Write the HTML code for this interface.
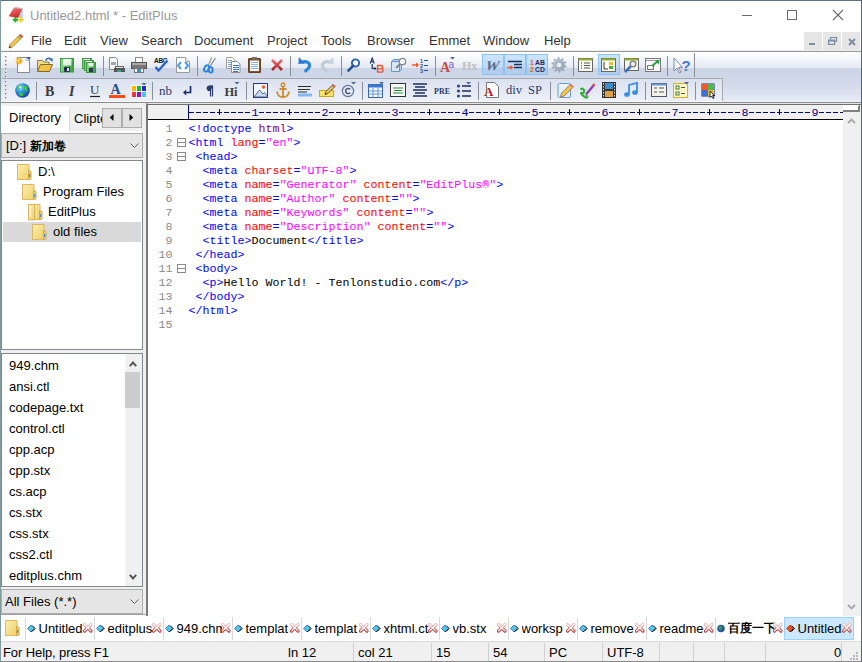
<!DOCTYPE html>
<html><head><meta charset="utf-8">
<style>
*{margin:0;padding:0;box-sizing:border-box}
html,body{width:862px;height:662px;overflow:hidden;background:#fff}
body{position:relative;font-family:"Liberation Sans",sans-serif;font-size:13px;color:#000}
.a{position:absolute}
.t{position:absolute;white-space:pre;line-height:15px;font-size:13px}
.m{position:absolute;white-space:pre;font-family:"Liberation Mono",monospace;font-size:11.67px;line-height:14px}
svg{position:absolute;overflow:visible}
</style></head><body>

<!-- window border -->
<div class="a" style="left:0;top:0;width:862px;height:1px;background:#5a7185"></div>
<div class="a" style="left:0;top:0;width:1px;height:662px;background:#819a9e"></div>
<div class="a" style="left:861px;top:0;width:1px;height:662px;background:#4f6a80"></div>

<!-- title -->
<div class="t" style="left:30px;top:8px;color:#999">Untitled2.html * - EditPlus</div>
<div class="a" style="left:742px;top:15px;width:10px;height:1px;background:#6a6a6a"></div>
<div class="a" style="left:787px;top:10px;width:10px;height:10px;border:1px solid #6a6a6a"></div>
<svg style="left:833px;top:10px" width="10" height="10"><path d="M0 0L10 10M10 0L0 10" stroke="#6a6a6a" stroke-width="1.1"/></svg>

<!-- menu -->
<div class="t" style="left:31px;top:33px;color:#333">File</div>
<div class="t" style="left:64px;top:33px;color:#333">Edit</div>
<div class="t" style="left:100px;top:33px;color:#333">View</div>
<div class="t" style="left:141px;top:33px;color:#333">Search</div>
<div class="t" style="left:194px;top:33px;color:#333">Document</div>
<div class="t" style="left:267px;top:33px;color:#333">Project</div>
<div class="t" style="left:321px;top:33px;color:#333">Tools</div>
<div class="t" style="left:367px;top:33px;color:#333">Browser</div>
<div class="t" style="left:429px;top:33px;color:#333">Emmet</div>
<div class="t" style="left:483px;top:33px;color:#333">Window</div>
<div class="t" style="left:544px;top:33px;color:#333">Help</div>
<div class="a" style="left:804px;top:32px;width:18px;height:17.5px;background:#e6e6e6"></div>
<div class="a" style="left:823px;top:32px;width:18px;height:17.5px;background:#e6e6e6"></div>
<div class="a" style="left:842px;top:32px;width:18px;height:17.5px;background:#e6e6e6"></div>
<div class="a" style="left:1px;top:50px;width:860px;height:1px;background:#ececec"></div>
<div class="a" style="left:1px;top:51px;width:860px;height:1px;background:#999"></div>

<!-- toolbar band -->
<div class="a" style="left:1px;top:52px;width:860px;height:51px;background:linear-gradient(#fff 0px,#f6f8fb 6px,#e3e8f2 15.9px,#ccd5e6 16px,#d0d8e9 30px,#dde3f0 43px,#e9edf6 49px)"></div>
<div class="a" style="left:2px;top:78px;width:721px;height:24px;border-top:1px solid #a4a8b0;border-right:1px solid #a4a8b0;background:linear-gradient(#dae1ef,#eef1f8)"></div>
<div class="a" style="left:1px;top:101px;width:722px;height:1px;background:#fafbfd"></div>
<div class="a" style="left:1px;top:102px;width:860px;height:1px;background:#8e8e8e"></div>
<!--ICONS-->
<div class="a" style="left:5px;top:56px;width:1px;height:1px;background:#7c8698;box-shadow:1px 1px 0 #fff,1px 0 0 #b8c0ce,0 1px 0 #b8c0ce"></div>
<div class="a" style="left:5px;top:60px;width:1px;height:1px;background:#7c8698;box-shadow:1px 1px 0 #fff,1px 0 0 #b8c0ce,0 1px 0 #b8c0ce"></div>
<div class="a" style="left:5px;top:64px;width:1px;height:1px;background:#7c8698;box-shadow:1px 1px 0 #fff,1px 0 0 #b8c0ce,0 1px 0 #b8c0ce"></div>
<div class="a" style="left:5px;top:68px;width:1px;height:1px;background:#7c8698;box-shadow:1px 1px 0 #fff,1px 0 0 #b8c0ce,0 1px 0 #b8c0ce"></div>
<div class="a" style="left:5px;top:72px;width:1px;height:1px;background:#7c8698;box-shadow:1px 1px 0 #fff,1px 0 0 #b8c0ce,0 1px 0 #b8c0ce"></div>
<div class="a" style="left:5px;top:76px;width:1px;height:1px;background:#7c8698;box-shadow:1px 1px 0 #fff,1px 0 0 #b8c0ce,0 1px 0 #b8c0ce"></div>
<div class="a" style="left:5px;top:81px;width:1px;height:1px;background:#7c8698;box-shadow:1px 1px 0 #fff,1px 0 0 #b8c0ce,0 1px 0 #b8c0ce"></div>
<div class="a" style="left:5px;top:85px;width:1px;height:1px;background:#7c8698;box-shadow:1px 1px 0 #fff,1px 0 0 #b8c0ce,0 1px 0 #b8c0ce"></div>
<div class="a" style="left:5px;top:89px;width:1px;height:1px;background:#7c8698;box-shadow:1px 1px 0 #fff,1px 0 0 #b8c0ce,0 1px 0 #b8c0ce"></div>
<div class="a" style="left:5px;top:93px;width:1px;height:1px;background:#7c8698;box-shadow:1px 1px 0 #fff,1px 0 0 #b8c0ce,0 1px 0 #b8c0ce"></div>
<div class="a" style="left:5px;top:97px;width:1px;height:1px;background:#7c8698;box-shadow:1px 1px 0 #fff,1px 0 0 #b8c0ce,0 1px 0 #b8c0ce"></div>
<div class="a" style="left:482px;top:54px;width:22px;height:21px;background:rgba(140,196,248,.42);border:1px solid #8cc4f4"></div>
<div class="a" style="left:504px;top:54px;width:22px;height:21px;background:rgba(140,196,248,.42);border:1px solid #8cc4f4"></div>
<div class="a" style="left:526px;top:54px;width:22px;height:21px;background:rgba(140,196,248,.42);border:1px solid #8cc4f4"></div>
<div class="a" style="left:598px;top:54px;width:22px;height:21px;background:rgba(140,196,248,.42);border:1px solid #8cc4f4"></div>
<svg style="left:15px;top:57px" width="16" height="16" viewBox="0 0 16 16"><rect x="2.5" y="0.5" width="12" height="15" fill="#fbfbfb" stroke="#8a8a8a"/><path d="M11 0.5v3h3.5" fill="#fff" stroke="#aaa" stroke-width=".8"/><g stroke="#ffc040" stroke-width="1.2" opacity=".8"><path d="M4 0v8M0 4h8M1.2 1.2l5.6 5.6M6.8 1.2l-5.6 5.6"/></g><circle cx="4" cy="4" r="2.6" fill="#ffa800"/><circle cx="3.5" cy="3.5" r="1.2" fill="#ffe070"/><path d="M11 0h5l-2.5 2.8z" fill="#3e5f92"/></svg>
<svg style="left:37px;top:57px" width="16" height="16" viewBox="0 0 16 16"><path d="M0.5 3.5h5l1.5 1.5h5v8h-11.5z" fill="#f6dc8a" stroke="#8f7c4c"/><path d="M0.5 14.5l3-7h12l-3 7z" fill="#f5c342" stroke="#7b6a3a"/><path d="M8.5 3.5Q11 0 14.2 2.2" fill="none" stroke="#3a6bb0" stroke-width="1.4"/><path d="M12.2 2.6l3.6-1.4-.4 3.8z" fill="#3a6bb0"/></svg>
<svg style="left:59px;top:57px" width="16" height="16" viewBox="0 0 16 16"><defs><linearGradient id="sg" x1="0" x2="1"><stop offset="0" stop-color="#8fd48f"/><stop offset=".5" stop-color="#5cb85c"/><stop offset="1" stop-color="#3f9f3f"/></linearGradient><linearGradient id="lg" x1="0" y1="0" x2="1" y2="1"><stop offset="0" stop-color="#fff"/><stop offset="1" stop-color="#cfe8cf"/></linearGradient></defs><rect x="1.5" y="1.5" width="13" height="13.5" fill="url(#sg)" stroke="#3f9a3f"/><rect x="4" y="2" width="8.5" height="6.5" fill="url(#lg)"/><rect x="5" y="10" width="6" height="5" fill="#2c3a58"/><rect x="8" y="11" width="2" height="3" fill="#dde"/><rect x="6" y="11" width="1.5" height="1.5" fill="#000"/></svg>
<svg style="left:81px;top:57px" width="16" height="16" viewBox="0 0 16 16"><rect x="1.5" y="1.5" width="9" height="10" fill="url(#sg)" stroke="#3f9a3f"/><rect x="3" y="2" width="6" height="1.5" fill="#fff"/><rect x="3.5" y="3.5" width="9" height="10" fill="url(#sg)" stroke="#3f9a3f"/><rect x="5" y="4" width="6" height="1.5" fill="#fff"/><rect x="5.5" y="5.5" width="9" height="10" fill="url(#sg)" stroke="#3f9a3f"/><rect x="7.5" y="6" width="5" height="3.5" fill="url(#lg)"/><rect x="8" y="11" width="4" height="4" fill="#2c3a58"/></svg>
<div class="a" style="left:103px;top:56px;width:1px;height:20px;background:#8a8e96"></div>
<svg style="left:109px;top:57px" width="16" height="16" viewBox="0 0 16 16"><path d="M0.5 0.5h6l2 2v10h-8z" fill="#fafafa" stroke="#8a8a8a"/><rect x="2" y="5" width="5" height="3" fill="#9ab"/><rect x="6.5" y="9.5" width="8" height="3" fill="#e8e8e8" stroke="#666"/><rect x="5" y="11" width="11" height="4" fill="#555"/><rect x="8" y="13" width="4" height="2" fill="#3a8"/></svg>
<svg style="left:131px;top:57px" width="16" height="16" viewBox="0 0 16 16"><rect x="4.5" y="0.5" width="7" height="5" fill="#fff" stroke="#888"/><rect x="0.5" y="5.5" width="15" height="6" fill="#777" stroke="#555"/><rect x="1" y="6" width="14" height="2" fill="#aaa"/><rect x="3.5" y="11.5" width="9" height="4" fill="#fff" stroke="#777"/><rect x="6" y="12" width="4" height="3" fill="#3a8fc0"/></svg>
<svg style="left:153px;top:57px" width="16" height="16" viewBox="0 0 16 16"><text x="1" y="6" font-family="Liberation Sans" font-weight="bold" font-size="6.5" fill="#111" letter-spacing="-.3">ABC</text><path d="M2.5 10l3 3.5 9-10" fill="none" stroke="#2e64c8" stroke-width="2.4"/></svg>
<svg style="left:175px;top:57px" width="16" height="16" viewBox="0 0 16 16"><path d="M1.5 0.5h9l4 4v11h-13z" fill="#fff" stroke="#999"/><path d="M10.5 0.5v4h4" fill="#eee" stroke="#aaa"/><path d="M6 5l-3 3.5 3 3.5M10 5l3 3.5-3 3.5" fill="none" stroke="#4a9ef0" stroke-width="2"/></svg>
<div class="a" style="left:197px;top:56px;width:1px;height:20px;background:#8a8e96"></div>
<svg style="left:202px;top:57px" width="16" height="16" viewBox="0 0 16 16"><path d="M6.5 8.5L9.5 0.5M8.5 8.5L13.5 1" stroke="#8a8a8a" stroke-width="1.3"/><path d="M9.5 0.5L7 8" stroke="#d0d0d0" stroke-width=".6"/><ellipse cx="4.6" cy="11.5" rx="2.3" ry="3.3" transform="rotate(25 4.6 11.5)" fill="none" stroke="#2a84e0" stroke-width="1.9"/><ellipse cx="8.6" cy="12.8" rx="2" ry="2.8" transform="rotate(-10 8.6 12.8)" fill="none" stroke="#2a84e0" stroke-width="1.9"/></svg>
<svg style="left:225px;top:57px" width="16" height="16" viewBox="0 0 16 16"><path d="M1.5 0.5h6l2 2v9h-8z" fill="#fff" stroke="#a0a0a0"/><path d="M3 3.5h4M3 5.5h5M3 7.5h5M3 9.5h4" stroke="#7aa0d0"/><path d="M6.5 4.5h6l2.5 2.5v8.5h-8.5z" fill="#fff" stroke="#909090"/><path d="M8 8.5h6M8 10.5h6M8 12.5h6M8 14.5h5" stroke="#3a70c0"/></svg>
<svg style="left:247px;top:57px" width="16" height="16" viewBox="0 0 16 16"><rect x="1.5" y="1.5" width="12" height="14" rx=".5" fill="#8a5222" stroke="#6b3e18"/><rect x="3" y="3.5" width="9" height="10.5" fill="#f6f9fc"/><path d="M4 5.5h7M4 7.5h7M4 9.5h7M4 11.5h7" stroke="#8ab8dc"/><rect x="5" y="0" width="5" height="2.5" fill="#707070"/></svg>
<svg style="left:269px;top:57px" width="16" height="16" viewBox="0 0 16 16"><defs><linearGradient id="xr" x1="0" y1="0" x2="0" y2="1"><stop offset="0" stop-color="#f06a6a"/><stop offset="1" stop-color="#a82020"/></linearGradient></defs><path d="M3 3l10 10M13 3l-10 10" stroke="url(#xr)" stroke-width="2.6"/></svg>
<div class="a" style="left:290px;top:56px;width:1px;height:20px;background:#8a8e96"></div>
<svg style="left:297px;top:57px" width="16" height="16" viewBox="0 0 16 16"><path d="M5 5.2C9 3.6 13.6 5.6 12.4 9.6 11.6 12 9.4 13.4 7.6 14.6" fill="none" stroke="#2a86dc" stroke-width="3.1"/><path d="M1.8 0L1.4 7 7.8 6.6z" fill="#2a7ad0"/></svg>
<svg style="left:319px;top:57px" width="16" height="16" viewBox="0 0 16 16"><path d="M11 5.2C7 3.6 2.4 5.6 3.6 9.6 4.4 12 6.6 13.4 8.4 14.6" fill="none" stroke="#bccdd8" stroke-width="3.1"/><path d="M14.2 0L14.6 7 8.2 6.6z" fill="#c4d4de"/></svg>
<div class="a" style="left:341px;top:56px;width:1px;height:20px;background:#8a8e96"></div>
<svg style="left:346px;top:57px" width="16" height="16" viewBox="0 0 16 16"><circle cx="9.5" cy="6" r="3.6" fill="#f4f8fc" stroke="#2a64b0" stroke-width="1.9"/><path d="M7 8.8l-4.6 4.8" stroke="#234e90" stroke-width="2.6" stroke-linecap="round"/></svg>
<svg style="left:369px;top:57px" width="16" height="16" viewBox="0 0 16 16"><path d="M1.2 6.5l2-5.5 2 5.5M1.8 4.8h2.8" fill="none" stroke="#1a2a50" stroke-width="1.1"/><path d="M3.2 7v4.5h3" fill="none" stroke="#1a2a50" stroke-width="1.2"/><path d="M5.5 9.8l2 1.7-2 1.7z" fill="#1a2a50"/><path d="M8.5 8.5h3.5a1.6 1.6 0 0 1 0 3.2h-3.5zM8.5 11.7h4a1.7 1.7 0 0 1 0 3.4h-4z" fill="none" stroke="#f05020" stroke-width="1.3"/></svg>
<svg style="left:391px;top:57px" width="16" height="16" viewBox="0 0 16 16"><path d="M0.5 4.5l2-2h8v10l-2 2h-8z" fill="#b8d2ee" stroke="#6a94c8"/><path d="M0.5 4.5h8v10M8.5 4.5l2-2" fill="none" stroke="#6a94c8"/><rect x="1" y="5" width="7" height="9" fill="#d6e6f6"/><circle cx="11.5" cy="4.5" r="3.2" fill="#fff" stroke="#8a8a8a" stroke-width="1.3"/><path d="M9.2 6.8l-4 4" stroke="#7a7a7a" stroke-width="1.8"/></svg>
<svg style="left:412px;top:57px" width="16" height="16" viewBox="0 0 16 16"><path d="M0 8h5" stroke="#f05a20" stroke-width="1.5"/><path d="M4 5.5l3 2.5-3 2.5z" fill="#f05a20"/><text x="8" y="5.5" font-family="Liberation Sans" font-size="5.5" font-weight="bold" fill="#2a4e8e">1</text><text x="8" y="10.5" font-family="Liberation Sans" font-size="5.5" font-weight="bold" fill="#2a4e8e">2</text><text x="8" y="15.5" font-family="Liberation Sans" font-size="5.5" font-weight="bold" fill="#2a4e8e">3</text><path d="M12 3.5h4M12 8.5h4M12 13.5h4" stroke="#2a4e8e" stroke-width="1.2"/></svg>
<div class="a" style="left:435px;top:56px;width:1px;height:20px;background:#8a8e96"></div>
<svg style="left:440px;top:57px" width="16" height="16" viewBox="0 0 16 16"><text x="0" y="15" font-family="Liberation Serif" font-weight="bold" font-size="14" fill="#c84848">A</text><text x="8.5" y="11" font-family="Liberation Sans" font-size="10" fill="#7060c8">a</text><path d="M10 0h5l-2.5 2.5z" fill="#4a6896"/></svg>
<svg style="left:462px;top:57px" width="20" height="16" viewBox="0 0 20 16"><text x="0" y="13" font-family="Liberation Serif" font-weight="bold" font-size="12" fill="#c0c0c0">Hx</text></svg>
<svg style="left:485px;top:57px" width="16" height="16" viewBox="0 0 16 16"><g transform="skewX(-18) translate(4 0)"><text x="0" y="13.5" font-family="Liberation Serif" font-weight="bold" font-size="13.5" fill="#5a6a86">W</text></g></svg>
<svg style="left:507px;top:57px" width="16" height="16" viewBox="0 0 16 16"><path d="M1 4.5h14M7 7.5h8M7 10.5h8" stroke="#1e2e5a" stroke-width="1.5"/><path d="M0 10.5h4" stroke="#f05a20" stroke-width="1.5"/><path d="M3.5 8l3 2.5-3 2.5z" fill="#f05a20"/></svg>
<svg style="left:529px;top:57px" width="16" height="16" viewBox="0 0 16 16"><text x="1" y="8" font-family="Liberation Sans" font-weight="bold" font-size="6.8" fill="#f05a20">1</text><text x="1" y="14.5" font-family="Liberation Sans" font-weight="bold" font-size="6.8" fill="#f05a20">2</text><text x="6" y="8" font-family="Liberation Sans" font-weight="bold" font-size="6.8" fill="#1a2a5a">AB</text><text x="6" y="14.5" font-family="Liberation Sans" font-weight="bold" font-size="6.8" fill="#1a2a5a">CD</text></svg>
<svg style="left:551px;top:57px" width="16" height="16" viewBox="0 0 16 16"><defs><linearGradient id="gg" x1="0" y1="0" x2="1" y2="1"><stop offset="0" stop-color="#c8d4e0"/><stop offset="1" stop-color="#8a9cb0"/></linearGradient></defs><path d="M13.40 8.00 L13.37 8.61 L15.21 9.14 L14.94 10.26 L13.06 9.89 L12.37 11.17 L12.37 11.17 L11.98 11.65 L13.16 13.16 L12.29 13.91 L10.98 12.50 L9.67 13.14 L9.67 13.14 L9.08 13.29 L9.14 15.21 L8.00 15.30 L7.76 13.39 L6.33 13.14 L6.33 13.14 L5.76 12.91 L4.69 14.50 L3.71 13.91 L4.64 12.22 L3.63 11.17 L3.63 11.17 L3.30 10.66 L1.50 11.31 L1.06 10.26 L2.80 9.44 L2.60 8.00 L2.60 8.00 L2.63 7.39 L0.79 6.86 L1.06 5.74 L2.94 6.11 L3.63 4.83 L3.63 4.83 L4.02 4.35 L2.84 2.84 L3.71 2.09 L5.02 3.50 L6.33 2.86 L6.33 2.86 L6.92 2.71 L6.86 0.79 L8.00 0.70 L8.24 2.61 L9.67 2.86 L9.67 2.86 L10.24 3.09 L11.31 1.50 L12.29 2.09 L11.36 3.78 L12.37 4.83 L12.37 4.83 L12.70 5.34 L14.50 4.69 L14.94 5.74 L13.20 6.56 L13.40 8.00Z" fill="url(#gg)" stroke="#8898a8" stroke-width=".6"/><circle cx="8" cy="8" r="3" fill="#e8edf5" stroke="#8898a8" stroke-width=".8"/></svg>
<div class="a" style="left:573px;top:56px;width:1px;height:20px;background:#8a8e96"></div>
<svg style="left:578px;top:57px" width="16" height="16" viewBox="0 0 16 16"><rect x="0.5" y="1.5" width="14" height="13" fill="#fbfbf4" stroke="#666"/><rect x="0.5" y="1.5" width="14" height="2" fill="#98b030"/><path d="M3 6h1M3 8.5h1M3 11h1" stroke="#e04020" stroke-width="1.4"/><path d="M6 6h6M6 8.5h6M6 11h6" stroke="#555"/></svg>
<svg style="left:601px;top:57px" width="16" height="16" viewBox="0 0 16 16"><rect x="0.5" y="1.5" width="14" height="13" fill="#fbfbf4" stroke="#666"/><rect x="0.5" y="1.5" width="14" height="2" fill="#98b030"/><path d="M3 5v7h4" fill="none" stroke="#333"/><rect x="8" y="5" width="4" height="3" fill="#f0c020"/><rect x="8" y="9" width="4" height="3" fill="#40b040"/></svg>
<svg style="left:623px;top:57px" width="16" height="16" viewBox="0 0 16 16"><rect x="1.5" y="1.5" width="14" height="12" fill="#f6f6f0" stroke="#666"/><rect x="1.5" y="1.5" width="14" height="2" fill="#98b030"/><path d="M2 15l6-6" stroke="#3a70c0" stroke-width="2.6"/><circle cx="10" cy="7" r="2.8" fill="none" stroke="#888" stroke-width="1.6"/></svg>
<svg style="left:645px;top:57px" width="16" height="16" viewBox="0 0 16 16"><rect x="0.5" y="1.5" width="15" height="13" fill="#fafafa" stroke="#777"/><path d="M1 3.5h14" stroke="#999"/><rect x="2.5" y="8.5" width="6" height="4" fill="none" stroke="#777"/><path d="M7 9l6-5" stroke="#20a040" stroke-width="1.8"/><path d="M10 3.5h4v4z" fill="#20a040"/></svg>
<div class="a" style="left:667px;top:56px;width:1px;height:20px;background:#8a8e96"></div>
<svg style="left:673px;top:57px" width="20" height="16" viewBox="0 0 20 16"><path d="M1 1v13l3-3 2.5 5 1.5-1-2.5-4.5h4z" fill="#fff" stroke="#7a8aa0"/><text x="8.5" y="14" font-family="Liberation Sans" font-weight="bold" font-size="15" fill="#4a78c8">?</text></svg>
<div class="a" style="left:694px;top:53px;width:1px;height:24px;background:#8a8e96"></div>
<svg style="left:15px;top:82px" width="16" height="16" viewBox="0 0 16 16"><defs><radialGradient id="glb" cx=".35" cy=".3" r=".75"><stop offset="0" stop-color="#8ee0ff"/><stop offset=".45" stop-color="#2a90e0"/><stop offset="1" stop-color="#1a3a9a"/></radialGradient></defs><circle cx="7.5" cy="8.5" r="7.3" fill="url(#glb)"/><path d="M1.5 6q2-3 4-3.5 1.5 1 .5 2.5-2 .5-1.5 2-2 .5-3-1zM9 4q2-1 3.5 1-.5 2 0 4-1.5 1-2.5-.5-1.5-2-1-4.5zM4 11q2-1 4 .5 1 1.5-.5 2.5-2 .5-3.5-1z" fill="#3ac83a"/><circle cx="5" cy="5" r="1.3" fill="#e8fff0" opacity=".8"/></svg>
<div class="a" style="left:36px;top:82px;width:1px;height:18px;background:#8a8e96"></div>
<svg style="left:43px;top:82px" width="16" height="16" viewBox="0 0 16 16"><text x="2" y="14" font-family="Liberation Serif" font-weight="bold" font-size="14" fill="#3a3a3a">B</text></svg>
<svg style="left:65px;top:82px" width="16" height="16" viewBox="0 0 16 16"><text x="4" y="14" font-family="Liberation Serif" font-weight="bold" font-style="italic" font-size="14" fill="#3a3a3a">I</text></svg>
<svg style="left:87px;top:82px" width="16" height="16" viewBox="0 0 16 16"><text x="3" y="12" font-family="Liberation Serif" font-size="13" fill="#3a3a3a">U</text><path d="M3 14.5h10" stroke="#222" stroke-width="1.2"/></svg>
<svg style="left:109px;top:82px" width="16" height="16" viewBox="0 0 16 16"><text x="1.5" y="12" font-family="Liberation Serif" font-weight="bold" font-size="14" fill="#2a4a8c">A</text><rect x="0" y="13" width="16" height="3" fill="#ff4a10"/></svg>
<svg style="left:131px;top:82px" width="16" height="16" viewBox="0 0 16 16"><rect x="0" y="3" width="16" height="13" fill="#fff" opacity=".85"/><rect x="1" y="4" width="4" height="5" fill="#ffb400"/><rect x="6" y="4" width="4" height="5" fill="#28b428"/><rect x="11" y="4" width="4" height="5" fill="#2828d8"/><rect x="1" y="10" width="4" height="5" fill="#f03040"/><rect x="6" y="10" width="4" height="5" fill="#a010b8"/><rect x="11" y="10" width="4" height="5" fill="#40c8f0"/><path d="M10.5 1h5l-2.5 2.5z" fill="#4a6896"/></svg>
<div class="a" style="left:152px;top:82px;width:1px;height:18px;background:#8a8e96"></div>
<svg style="left:158px;top:82px" width="16" height="16" viewBox="0 0 16 16"><text x="1" y="13" font-family="Liberation Serif" font-size="13" fill="#2a3a6a">nb</text></svg>
<svg style="left:180px;top:82px" width="16" height="16" viewBox="0 0 16 16"><path d="M10.5 4v6.5h-5.5" fill="none" stroke="#1e2e6a" stroke-width="1.7"/><path d="M3 10.5l3.2-3v6z" fill="#1e2e6a"/></svg>
<svg style="left:202px;top:82px" width="16" height="16" viewBox="0 0 16 16"><path d="M8.5 3.5v11M10.5 3.5v11" stroke="#2a3a6a" stroke-width="1.2"/><path d="M11 3.5H7.5a2.8 2.8 0 0 0 0 5.6h1" fill="#2a3a6a"/></svg>
<svg style="left:224px;top:82px" width="16" height="16" viewBox="0 0 16 16"><text x="0.5" y="13.5" font-family="Liberation Serif" font-weight="bold" font-size="12.5" fill="#404040">H</text><text x="10" y="13.5" font-family="Liberation Serif" font-weight="bold" font-size="12.5" fill="#404040">i</text><path d="M10.5 0h5l-2.5 2.5z" fill="#4a6896"/></svg>
<div class="a" style="left:246px;top:82px;width:1px;height:18px;background:#8a8e96"></div>
<svg style="left:253px;top:82px" width="16" height="16" viewBox="0 0 16 16"><rect x="0.5" y="1.5" width="14" height="14" fill="#f0f6fc" stroke="#2a3a7a"/><path d="M1 15l5.5-7 3.5 4 1.5-1.5 3.5 4.5z" fill="#c8daf0" stroke="#3a4a7a" stroke-width=".8"/><circle cx="10.5" cy="5" r="1.8" fill="#f06030"/></svg>
<svg style="left:275px;top:82px" width="16" height="16" viewBox="0 0 16 16"><circle cx="8" cy="2.8" r="1.8" fill="none" stroke="#d08a30" stroke-width="1.4"/><path d="M8 4.5v10.5M4.5 7h7" stroke="#d08a30" stroke-width="1.8"/><path d="M2 9.5q.5 5.5 6 5.5t6-5.5" fill="none" stroke="#d08a30" stroke-width="1.8"/></svg>
<svg style="left:297px;top:82px" width="16" height="16" viewBox="0 0 16 16"><path d="M1 4.5h13M1 7.5h12M1 10h9" stroke="#303030" stroke-width="1.1"/><rect x="1" y="11.5" width="14" height="3" fill="#86b8f0"/></svg>
<svg style="left:319px;top:82px" width="16" height="16" viewBox="0 0 16 16"><rect x="0.5" y="8.5" width="14" height="6" fill="#ffe468" stroke="#c8a820"/><path d="M6 12.5l1-3 7-7 2 2-7 7z" fill="#f2c450" stroke="#333" stroke-width=".8"/><path d="M13 3.5l1.2-1.2 2 2-1.2 1.2z" fill="#e05050"/><path d="M6 12.5l.4-1.4 1 1z" fill="#222"/></svg>
<svg style="left:341px;top:82px" width="16" height="16" viewBox="0 0 16 16"><circle cx="7" cy="9" r="5.6" fill="none" stroke="#6a7a9a" stroke-width="1.3"/><path d="M9.2 7.3a2.6 2.6 0 1 0 0 3.4" fill="none" stroke="#4a5a7a" stroke-width="1.5"/><path d="M10 0h5l-2.5 2.5z" fill="#4a6896"/></svg>
<div class="a" style="left:362px;top:82px;width:1px;height:18px;background:#8a8e96"></div>
<svg style="left:368px;top:82px" width="16" height="16" viewBox="0 0 16 16"><rect x="0.5" y="2.5" width="14" height="13" fill="#f4f8fd" stroke="#3a68b0"/><rect x="0.5" y="2.5" width="14" height="3" fill="#3a78d0"/><path d="M5 6v9M10 6v9M1 9h13M1 12h13" stroke="#6a98d8"/><path d="M11 0h5l-2.5 2.5z" fill="#4a6896"/></svg>
<svg style="left:390px;top:82px" width="16" height="16" viewBox="0 0 16 16"><rect x="0.5" y="1.5" width="15" height="13" fill="#fff" stroke="#333"/><path d="M3 6h10M4 8.5h8M3 11h10" stroke="#208a30" stroke-width="1.2"/></svg>
<svg style="left:412px;top:82px" width="16" height="16" viewBox="0 0 16 16"><path d="M1 2h14M3 5h10M1 8h14M3 11h10M1 14h14" stroke="#1e2e5a" stroke-width="1.4"/></svg>
<svg style="left:434px;top:82px" width="18" height="16" viewBox="0 0 18 16"><text x="0" y="12" font-family="Liberation Serif" font-weight="bold" font-size="8" fill="#2a3a6a">PRE</text></svg>
<svg style="left:456px;top:82px" width="16" height="16" viewBox="0 0 16 16"><circle cx="2.5" cy="4" r="1.6" fill="#2a4a8c"/><circle cx="2.5" cy="9" r="1.6" fill="#2a4a8c"/><circle cx="2.5" cy="14" r="1.6" fill="#2a4a8c"/><path d="M6 4h9M6 9h9M6 14h9" stroke="#1e2e5a" stroke-width="1.4"/><path d="M10 0h5l-2.5 2.5z" fill="#4a6896"/></svg>
<div class="a" style="left:478px;top:82px;width:1px;height:18px;background:#8a8e96"></div>
<svg style="left:484px;top:82px" width="16" height="16" viewBox="0 0 16 16"><path d="M2.5 0.5h8l4 4v11h-12z" fill="#fff" stroke="#777"/><text x="0" y="14" font-family="Liberation Serif" font-weight="bold" font-size="13" fill="#c02020">A</text></svg>
<svg style="left:506px;top:82px" width="18" height="16" viewBox="0 0 18 16"><text x="0" y="12" font-family="Liberation Serif" font-size="12.5" fill="#2a3a6a">div</text></svg>
<svg style="left:528px;top:82px" width="18" height="16" viewBox="0 0 18 16"><text x="0" y="12" font-family="Liberation Serif" font-size="12.5" fill="#2a3a6a">SP</text></svg>
<div class="a" style="left:550px;top:82px;width:1px;height:18px;background:#8a8e96"></div>
<svg style="left:557px;top:82px" width="16" height="16" viewBox="0 0 16 16"><path d="M2.5 1.5h9.5q1.5 0 1.5 1.5v11q0 1.5-1.5 1.5h-9.5q-1.5 0-1.5-1.5v-11q0-1.5 1.5-1.5z" fill="#e4f0fc" stroke="#6a9ad0"/><path d="M3 3h7" stroke="#fff"/><path d="M3.5 15l1-3.8 8.5-8.5 2.8 2.8-8.5 8.5z" fill="#f2c450" stroke="#8a6a30" stroke-width=".8"/><path d="M13 2.7l1-1 2.8 2.8-1 1z" fill="#e07070"/></svg>
<svg style="left:579px;top:82px" width="16" height="16" viewBox="0 0 16 16"><path d="M1.5 7.5q3-2 3.5 1t-2 2.5 1.5 3 4-.5" fill="none" stroke="#30b030" stroke-width="2.2"/><path d="M7 12.5l7.5-9" stroke="#8a40b8" stroke-width="2.4"/><path d="M13.8 4.3l1.8-2.2" stroke="#e04a4a" stroke-width="2.4"/><path d="M7 12.5l-.8 1.5 1.6-.7z" fill="#333"/></svg>
<svg style="left:601px;top:82px" width="16" height="16" viewBox="0 0 16 16"><rect x="1" y="0" width="14" height="16" fill="#333"/><rect x="4" y="1" width="8" height="6" fill="#3a90d0"/><rect x="4" y="9" width="8" height="6" fill="#e0a040"/><path d="M2.5 1v14M13.5 1v14" stroke="#ddd" stroke-dasharray="1.5 1.5"/></svg>
<svg style="left:623px;top:82px" width="16" height="16" viewBox="0 0 16 16"><path d="M6 12V3l8-2v9" fill="none" stroke="#3a8ee0" stroke-width="1.8"/><ellipse cx="4" cy="12.5" rx="2.8" ry="2.3" fill="#3a8ee0"/><ellipse cx="12" cy="10.5" rx="2.8" ry="2.3" fill="#3a8ee0"/></svg>
<div class="a" style="left:645px;top:82px;width:1px;height:18px;background:#8a8e96"></div>
<svg style="left:651px;top:82px" width="16" height="16" viewBox="0 0 16 16"><rect x="0.5" y="1.5" width="15" height="13" fill="#f4f4ea" stroke="#556"/><rect x="0.5" y="1.5" width="15" height="2" fill="#6a98d8"/><path d="M3 6h3M8 6h5M3 10h3M8 10h5" stroke="#556" stroke-width="1.2"/></svg>
<svg style="left:673px;top:82px" width="16" height="16" viewBox="0 0 16 16"><rect x="0.5" y="1.5" width="14" height="14" fill="#fff6c0" stroke="#e0b020"/><rect x="3" y="4" width="3" height="3" fill="#fff" stroke="#3a7a3a"/><rect x="3" y="10" width="3" height="3" fill="#fff" stroke="#3a7a3a"/><path d="M8 5.5h4M8 11.5h4" stroke="#555"/><path d="M11 0h5l-2.5 2.5z" fill="#4a6896"/></svg>
<div class="a" style="left:695px;top:82px;width:1px;height:18px;background:#8a8e96"></div>
<svg style="left:701px;top:83px" width="15" height="15" viewBox="0 0 15 15"><rect x="0.5" y="0.5" width="13" height="13" fill="#1a2a6a"/><rect x="1" y="1" width="6" height="6" fill="#f05a30"/><rect x="7" y="1" width="6" height="6" fill="#50b850"/><rect x="1" y="7" width="6" height="6" fill="#3a70d0"/><rect x="7" y="7" width="6" height="6" fill="#f0c020"/><path d="M9 8v6.5l1.5-1.5 1.5 2.5 1-.6-1.4-2.4h2z" fill="#fff" stroke="#000" stroke-width=".8"/></svg>
<!--/ICONS-->

<!-- left panel -->
<div class="a" style="left:1px;top:103px;width:145px;height:512px;background:#f0f0f0"></div>
<div class="a" style="left:1px;top:106px;width:68px;height:27px;background:#fff"></div>
<div class="t" style="left:9px;top:110px">Directory</div>
<div class="a" style="left:69px;top:109px;width:34px;height:22px;background:#f0f0f0;border-left:1px solid #d9d9d9;overflow:hidden"><div class="t" style="left:4px;top:2px">Cliptext</div></div>
<div class="a" style="left:102px;top:108px;width:20px;height:20px;background:#e1e1e1;border:1px solid #adadad"></div>
<div class="a" style="left:122px;top:108px;width:20px;height:20px;background:#e1e1e1;border:1px solid #adadad"></div>
<div class="a" style="left:1px;top:133px;width:142px;height:25px;background:#e5e5e5;border:1px solid #adadad"></div>
<div class="t" style="left:6px;top:138px">[D:] <span style="font-size:12px;font-weight:bold">新加卷</span></div>
<div class="a" style="left:1px;top:160px;width:142px;height:190px;background:#fff;border:1px solid #828790"></div>
<div class="a" style="left:3px;top:222px;width:138px;height:20px;background:#d9d9d9"></div>
<div class="t" style="left:38px;top:164px">D:\</div>
<div class="t" style="left:43px;top:184px">Program Files</div>
<div class="t" style="left:48px;top:204px">EditPlus</div>
<div class="t" style="left:53px;top:224px">old files</div>
<div class="a" style="left:1px;top:353px;width:142px;height:234px;background:#fff;border:1px solid #828790"></div>
<div class="a" style="left:125px;top:354px;width:17px;height:232px;background:#f0f0f0;border-left:1px solid #f4f8fc"></div>
<div class="a" style="left:125px;top:372px;width:15px;height:36px;background:#cdcdcd"></div>
<div class="t" style="left:9px;top:358px">949.chm</div>
<div class="t" style="left:9px;top:379px">ansi.ctl</div>
<div class="t" style="left:9px;top:400px">codepage.txt</div>
<div class="t" style="left:9px;top:421px">control.ctl</div>
<div class="t" style="left:9px;top:442px">cpp.acp</div>
<div class="t" style="left:9px;top:463px">cpp.stx</div>
<div class="t" style="left:9px;top:484px">cs.acp</div>
<div class="t" style="left:9px;top:505px">cs.stx</div>
<div class="t" style="left:9px;top:526px">css.stx</div>
<div class="t" style="left:9px;top:547px">css2.ctl</div>
<div class="t" style="left:9px;top:568px">editplus.chm</div>
<div class="a" style="left:1px;top:589px;width:142px;height:25px;background:#e5e5e5;border:1px solid #adadad"></div>
<div class="t" style="left:5px;top:594px">All Files (*.*)</div>

<!-- editor -->
<div class="a" style="left:146px;top:103px;width:715px;height:513px;background:#fff;border-left:2px solid #787878;border-top:1px solid #e4e4e4"><div class="a" style="left:0;top:0;width:713px;height:1px;background:#6e6e6e"></div></div>
<div class="a" style="left:148px;top:105px;width:695px;height:14px;background:#f0f0f0"></div>
<div class="a" style="left:148px;top:119px;width:695px;height:1px;background:#000"></div>
<div class="a" style="left:843px;top:105px;width:18px;height:511px;background:#f0f0f0"></div>


<!-- code -->
<div class="a" style="left:148px;top:105px;width:695px;height:14px;overflow:hidden;background:#f0f0f0"><div class="a" style="left:40px;top:0;width:1px;height:14px;background:#000080"></div><div class="a" style="left:41px;top:7px;width:5px;height:1px;background:#000080"></div><div class="a" style="left:48px;top:7px;width:5px;height:1px;background:#000080"></div><div class="a" style="left:55px;top:7px;width:5px;height:1px;background:#000080"></div><div class="a" style="left:62px;top:7px;width:5px;height:1px;background:#000080"></div><div class="a" style="left:69px;top:7px;width:5px;height:1px;background:#000080"></div><div class="a" style="left:71px;top:4px;width:1px;height:6px;background:#000080"></div><div class="a" style="left:76px;top:7px;width:5px;height:1px;background:#000080"></div><div class="a" style="left:83px;top:7px;width:5px;height:1px;background:#000080"></div><div class="a" style="left:90px;top:7px;width:5px;height:1px;background:#000080"></div><div class="a" style="left:97px;top:7px;width:5px;height:1px;background:#000080"></div><div class="m" style="left:103.5px;top:0.5px;color:#000080">1</div><div class="a" style="left:111px;top:7px;width:5px;height:1px;background:#000080"></div><div class="a" style="left:118px;top:7px;width:5px;height:1px;background:#000080"></div><div class="a" style="left:125px;top:7px;width:5px;height:1px;background:#000080"></div><div class="a" style="left:132px;top:7px;width:5px;height:1px;background:#000080"></div><div class="a" style="left:139px;top:7px;width:5px;height:1px;background:#000080"></div><div class="a" style="left:141px;top:4px;width:1px;height:6px;background:#000080"></div><div class="a" style="left:146px;top:7px;width:5px;height:1px;background:#000080"></div><div class="a" style="left:153px;top:7px;width:5px;height:1px;background:#000080"></div><div class="a" style="left:160px;top:7px;width:5px;height:1px;background:#000080"></div><div class="a" style="left:167px;top:7px;width:5px;height:1px;background:#000080"></div><div class="m" style="left:173.5px;top:0.5px;color:#000080">2</div><div class="a" style="left:181px;top:7px;width:5px;height:1px;background:#000080"></div><div class="a" style="left:188px;top:7px;width:5px;height:1px;background:#000080"></div><div class="a" style="left:195px;top:7px;width:5px;height:1px;background:#000080"></div><div class="a" style="left:202px;top:7px;width:5px;height:1px;background:#000080"></div><div class="a" style="left:209px;top:7px;width:5px;height:1px;background:#000080"></div><div class="a" style="left:211px;top:4px;width:1px;height:6px;background:#000080"></div><div class="a" style="left:216px;top:7px;width:5px;height:1px;background:#000080"></div><div class="a" style="left:223px;top:7px;width:5px;height:1px;background:#000080"></div><div class="a" style="left:230px;top:7px;width:5px;height:1px;background:#000080"></div><div class="a" style="left:237px;top:7px;width:5px;height:1px;background:#000080"></div><div class="m" style="left:243.5px;top:0.5px;color:#000080">3</div><div class="a" style="left:251px;top:7px;width:5px;height:1px;background:#000080"></div><div class="a" style="left:258px;top:7px;width:5px;height:1px;background:#000080"></div><div class="a" style="left:265px;top:7px;width:5px;height:1px;background:#000080"></div><div class="a" style="left:272px;top:7px;width:5px;height:1px;background:#000080"></div><div class="a" style="left:279px;top:7px;width:5px;height:1px;background:#000080"></div><div class="a" style="left:281px;top:4px;width:1px;height:6px;background:#000080"></div><div class="a" style="left:286px;top:7px;width:5px;height:1px;background:#000080"></div><div class="a" style="left:293px;top:7px;width:5px;height:1px;background:#000080"></div><div class="a" style="left:300px;top:7px;width:5px;height:1px;background:#000080"></div><div class="a" style="left:307px;top:7px;width:5px;height:1px;background:#000080"></div><div class="m" style="left:313.5px;top:0.5px;color:#000080">4</div><div class="a" style="left:321px;top:7px;width:5px;height:1px;background:#000080"></div><div class="a" style="left:328px;top:7px;width:5px;height:1px;background:#000080"></div><div class="a" style="left:335px;top:7px;width:5px;height:1px;background:#000080"></div><div class="a" style="left:342px;top:7px;width:5px;height:1px;background:#000080"></div><div class="a" style="left:349px;top:7px;width:5px;height:1px;background:#000080"></div><div class="a" style="left:351px;top:4px;width:1px;height:6px;background:#000080"></div><div class="a" style="left:356px;top:7px;width:5px;height:1px;background:#000080"></div><div class="a" style="left:363px;top:7px;width:5px;height:1px;background:#000080"></div><div class="a" style="left:370px;top:7px;width:5px;height:1px;background:#000080"></div><div class="a" style="left:377px;top:7px;width:5px;height:1px;background:#000080"></div><div class="m" style="left:383.5px;top:0.5px;color:#000080">5</div><div class="a" style="left:391px;top:7px;width:5px;height:1px;background:#000080"></div><div class="a" style="left:398px;top:7px;width:5px;height:1px;background:#000080"></div><div class="a" style="left:405px;top:7px;width:5px;height:1px;background:#000080"></div><div class="a" style="left:412px;top:7px;width:5px;height:1px;background:#000080"></div><div class="a" style="left:419px;top:7px;width:5px;height:1px;background:#000080"></div><div class="a" style="left:421px;top:4px;width:1px;height:6px;background:#000080"></div><div class="a" style="left:426px;top:7px;width:5px;height:1px;background:#000080"></div><div class="a" style="left:433px;top:7px;width:5px;height:1px;background:#000080"></div><div class="a" style="left:440px;top:7px;width:5px;height:1px;background:#000080"></div><div class="a" style="left:447px;top:7px;width:5px;height:1px;background:#000080"></div><div class="m" style="left:453.5px;top:0.5px;color:#000080">6</div><div class="a" style="left:461px;top:7px;width:5px;height:1px;background:#000080"></div><div class="a" style="left:468px;top:7px;width:5px;height:1px;background:#000080"></div><div class="a" style="left:475px;top:7px;width:5px;height:1px;background:#000080"></div><div class="a" style="left:482px;top:7px;width:5px;height:1px;background:#000080"></div><div class="a" style="left:489px;top:7px;width:5px;height:1px;background:#000080"></div><div class="a" style="left:491px;top:4px;width:1px;height:6px;background:#000080"></div><div class="a" style="left:496px;top:7px;width:5px;height:1px;background:#000080"></div><div class="a" style="left:503px;top:7px;width:5px;height:1px;background:#000080"></div><div class="a" style="left:510px;top:7px;width:5px;height:1px;background:#000080"></div><div class="a" style="left:517px;top:7px;width:5px;height:1px;background:#000080"></div><div class="m" style="left:523.5px;top:0.5px;color:#000080">7</div><div class="a" style="left:531px;top:7px;width:5px;height:1px;background:#000080"></div><div class="a" style="left:538px;top:7px;width:5px;height:1px;background:#000080"></div><div class="a" style="left:545px;top:7px;width:5px;height:1px;background:#000080"></div><div class="a" style="left:552px;top:7px;width:5px;height:1px;background:#000080"></div><div class="a" style="left:559px;top:7px;width:5px;height:1px;background:#000080"></div><div class="a" style="left:561px;top:4px;width:1px;height:6px;background:#000080"></div><div class="a" style="left:566px;top:7px;width:5px;height:1px;background:#000080"></div><div class="a" style="left:573px;top:7px;width:5px;height:1px;background:#000080"></div><div class="a" style="left:580px;top:7px;width:5px;height:1px;background:#000080"></div><div class="a" style="left:587px;top:7px;width:5px;height:1px;background:#000080"></div><div class="m" style="left:593.5px;top:0.5px;color:#000080">8</div><div class="a" style="left:601px;top:7px;width:5px;height:1px;background:#000080"></div><div class="a" style="left:608px;top:7px;width:5px;height:1px;background:#000080"></div><div class="a" style="left:615px;top:7px;width:5px;height:1px;background:#000080"></div><div class="a" style="left:622px;top:7px;width:5px;height:1px;background:#000080"></div><div class="a" style="left:629px;top:7px;width:5px;height:1px;background:#000080"></div><div class="a" style="left:631px;top:4px;width:1px;height:6px;background:#000080"></div><div class="a" style="left:636px;top:7px;width:5px;height:1px;background:#000080"></div><div class="a" style="left:643px;top:7px;width:5px;height:1px;background:#000080"></div><div class="a" style="left:650px;top:7px;width:5px;height:1px;background:#000080"></div><div class="a" style="left:657px;top:7px;width:5px;height:1px;background:#000080"></div><div class="m" style="left:663.5px;top:0.5px;color:#000080">9</div><div class="a" style="left:671px;top:7px;width:5px;height:1px;background:#000080"></div><div class="a" style="left:678px;top:7px;width:5px;height:1px;background:#000080"></div><div class="a" style="left:685px;top:7px;width:5px;height:1px;background:#000080"></div><div class="a" style="left:692px;top:7px;width:5px;height:1px;background:#000080"></div><div class="a" style="left:699px;top:7px;width:5px;height:1px;background:#000080"></div><div class="a" style="left:701px;top:4px;width:1px;height:6px;background:#000080"></div><div class="a" style="left:706px;top:7px;width:5px;height:1px;background:#000080"></div><div class="a" style="left:713px;top:7px;width:5px;height:1px;background:#000080"></div><div class="a" style="left:720px;top:7px;width:5px;height:1px;background:#000080"></div><div class="a" style="left:727px;top:7px;width:5px;height:1px;background:#000080"></div><div class="m" style="left:733.5px;top:0.5px;color:#000080">0</div></div>
<div class="m" style="left:148px;top:122px;color:#8a8a8a;text-align:right;width:24.5px">1
2
3
4
5
6
7
8
9
10
11
12
13
14
15</div>
<div class="m" style="left:188.5px;top:122px;color:#0000ff"><span>&lt;!doctype <span style="color:#800080">html</span>&gt;</span>
&lt;html <span style="color:#f00">lang</span>=<span style="color:#f0f">"en"</span>&gt;
 &lt;head&gt;
  &lt;meta <span style="color:#f00">charset</span>=<span style="color:#f0f">"UTF-8"</span>&gt;
  &lt;meta <span style="color:#f00">name</span>=<span style="color:#f0f">"Generator"</span> <span style="color:#f00">content</span>=<span style="color:#f0f">"EditPlus®"</span>&gt;
  &lt;meta <span style="color:#f00">name</span>=<span style="color:#f0f">"Author"</span> <span style="color:#f00">content</span>=<span style="color:#f0f">""</span>&gt;
  &lt;meta <span style="color:#f00">name</span>=<span style="color:#f0f">"Keywords"</span> <span style="color:#f00">content</span>=<span style="color:#f0f">""</span>&gt;
  &lt;meta <span style="color:#f00">name</span>=<span style="color:#f0f">"Description"</span> <span style="color:#f00">content</span>=<span style="color:#f0f">""</span>&gt;
  &lt;title&gt;<span style="color:#000">Document</span>&lt;/title&gt;
 &lt;/head&gt;
 &lt;body&gt;
  &lt;p&gt;<span style="color:#000">Hello World! - Tenlonstudio.com</span>&lt;/p&gt;
 &lt;/body&gt;
&lt;/html&gt;
</div>

<!-- tab bar -->
<div class="a" style="left:1px;top:616px;width:860px;height:26px;background:#fff"></div>
<div class="a" style="left:1px;top:641px;width:860px;height:1px;background:#dadada"></div>

<!-- status bar -->
<div class="a" style="left:1px;top:642px;width:860px;height:19px;background:#f0f0f0"></div>
<div class="a" style="left:0;top:661px;width:862px;height:1px;background:#8a8a8a"></div>
<div class="t" style="left:3px;top:645px;letter-spacing:-0.1px">For Help, press F1</div>

<!--EXTRAS-->
<svg width="0" height="0" style="position:absolute"><defs><linearGradient id="fg" x1="0" y1="0" x2="1" y2="1"><stop offset="0" stop-color="#fcf0b0"/><stop offset="1" stop-color="#f0cf68"/></linearGradient></defs></svg>
<svg style="left:8px;top:6px" width="17" height="17" viewBox="0 0 17 17"><defs><linearGradient id="nb" x1="0" y1="0" x2=".3" y2="1"><stop offset="0" stop-color="#f4a0a0"/><stop offset=".4" stop-color="#e65a5a"/><stop offset="1" stop-color="#d42a2a"/></linearGradient></defs><path d="M6.3 1l8.5 1.2-4.6 9.8-9.5-1.7z" fill="url(#nb)"/><path d="M6.3 1l8.5 1.2-.4.9-8.5-1.2z" fill="#d8c8c8"/><path d="M14.8 2.2v9.8h-4.6z" fill="#b8d0e8"/><path d="M10.2 12.7h-1.8v-1.8h-2v1.8h-1.8v2h1.8v1.8h2v-1.8h1.8z" fill="#28b028"/><path d="M15.6 12.7h-1.8v-1.8h-2v1.8h-1.8v2h1.8v1.8h2v-1.8h1.8z" fill="#f0d020"/></svg>
<svg style="left:7px;top:33px" width="17" height="16" viewBox="0 0 17 16"><path d="M2 15l1-3.5 10-10 2.5 2.5-10 10z" fill="#f2c850" stroke="#9a7a30" stroke-width=".8"/><path d="M12 2.5l1.5-1.5 2.5 2.5-1.5 1.5z" fill="#d84a4a"/><path d="M11 3.5l2.5 2.5" stroke="#40a040" stroke-width="1"/><path d="M2 15l.6-2.2 1.6 1.6z" fill="#333"/></svg>
<div class="a" style="left:809px;top:42.5px;width:6px;height:2px;background:#7d8ca0"></div>
<svg style="left:828px;top:37px" width="9" height="8" viewBox="0 0 9 8"><path d="M2.5 2.5v-2h6v4h-2" fill="none" stroke="#7d8ca0" stroke-width="1.2"/><rect x="0.6" y="3.1" width="6" height="4.3" fill="none" stroke="#7d8ca0" stroke-width="1.2"/><rect x="0.6" y="3.1" width="6" height="1.4" fill="#7d8ca0"/></svg>
<svg style="left:848px;top:38px" width="8" height="8" viewBox="0 0 8 8"><path d="M1 1l6 6M7 1l-6 6" stroke="#7d8ca0" stroke-width="2"/></svg>
<svg style="left:109px;top:114px" width="5" height="7"><path d="M4.5 0v7l-3.7-3.5z" fill="#000"/></svg>
<svg style="left:129px;top:114px" width="5" height="7"><path d="M0.5 0v7l3.7-3.5z" fill="#000"/></svg>
<svg style="left:130px;top:143px" width="10" height="6"><path d="M0.5 0.5l4 4 4-4" fill="none" stroke="#606060" stroke-width="1"/></svg>
<svg style="left:130px;top:599px" width="10" height="6"><path d="M0.5 0.5l4 4 4-4" fill="none" stroke="#606060" stroke-width="1"/></svg>
<div class="a" style="left:69px;top:131px;width:72px;height:2px;background:#fff"></div>
<svg style="left:17px;top:164px" width="15" height="16" viewBox="0 0 15 16"><path d="M0.5 0.5h11.5v15h-11.5z" fill="url(#fg)" stroke="#dcb860"/><path d="M11.5 6.5l2.5 1v7.5l-2.5.5z" fill="#f2d57a" stroke="#d0a850"/><rect x="12" y="10" width="1.2" height="3" fill="#3c8ee0"/></svg>
<svg style="left:22px;top:184px" width="15" height="16" viewBox="0 0 15 16"><path d="M0.5 0.5h11.5v15h-11.5z" fill="url(#fg)" stroke="#dcb860"/><path d="M11.5 6.5l2.5 1v7.5l-2.5.5z" fill="#f2d57a" stroke="#d0a850"/><rect x="12" y="10" width="1.2" height="3" fill="#3c8ee0"/></svg>
<svg style="left:28px;top:204px" width="15" height="16" viewBox="0 0 15 16"><path d="M0.5 0.5h11.5v15h-11.5z" fill="url(#fg)" stroke="#dcb860"/><path d="M0.5 0.5h5l1 1v14l-1 .5h-5z" fill="url(#fg)" stroke="#d8b45c"/><path d="M2 2v11" stroke="#fff" stroke-width="1" opacity=".9"/><path d="M11.5 6.5l2.5 1v7.5l-2.5.5z" fill="#f2d57a" stroke="#d0a850"/><rect x="12" y="10" width="1.2" height="3" fill="#3c8ee0"/></svg>
<svg style="left:32px;top:224px" width="15" height="16" viewBox="0 0 15 16"><path d="M0.5 0.5h11.5v15h-11.5z" fill="url(#fg)" stroke="#dcb860"/><path d="M11.5 6.5l2.5 1v7.5l-2.5.5z" fill="#f2d57a" stroke="#d0a850"/><rect x="12" y="10" width="1.2" height="3" fill="#3c8ee0"/></svg>
<svg style="left:129px;top:361px" width="8" height="6"><path d="M0.8 5.2l3.2-3.6 3.2 3.6" fill="none" stroke="#555" stroke-width="2"/></svg>
<svg style="left:129px;top:574px" width="8" height="6"><path d="M0.8 0.8l3.2 3.6 3.2-3.6" fill="none" stroke="#555" stroke-width="2"/></svg>
<div class="a" style="left:177px;top:138px;width:9px;height:9px;border:1px solid #8c8c8c;background:#fff"><div class="a" style="left:0;top:3px;width:7px;height:1px;background:#8c8c8c"></div></div>
<div class="a" style="left:177px;top:152px;width:9px;height:9px;border:1px solid #8c8c8c;background:#fff"><div class="a" style="left:0;top:3px;width:7px;height:1px;background:#8c8c8c"></div></div>
<div class="a" style="left:177px;top:264px;width:9px;height:9px;border:1px solid #8c8c8c;background:#fff"><div class="a" style="left:0;top:3px;width:7px;height:1px;background:#8c8c8c"></div></div>
<div class="a" style="left:843px;top:105px;width:17px;height:7px;background:#fff;border-right:2px solid #808080;border-bottom:2px solid #808080;border-top:1px solid #fff"></div>
<svg style="left:847px;top:118px" width="9" height="6"><path d="M1 5l3.5-3.5 3.5 3.5" fill="none" stroke="#a8a8a8" stroke-width="1.8"/></svg>
<svg style="left:847px;top:604px" width="9" height="6"><path d="M1 1l3.5 3.5 3.5-3.5" fill="none" stroke="#a8a8a8" stroke-width="1.8"/></svg>
<div class="a" style="left:1px;top:614px;width:146px;height:1px;background:#a0a0a0"></div>
<svg style="left:5px;top:620px" width="15" height="16" viewBox="0 0 15 16"><path d="M0.5 0.5h11.5v15h-11.5z" fill="url(#fg)" stroke="#dcb860"/><path d="M11.5 6.5l2.5 1v7.5l-2.5.5z" fill="#f2d57a" stroke="#d0a850"/><rect x="12" y="10" width="1.2" height="3" fill="#3c8ee0"/></svg>
<div class="a" style="left:25px;top:617px;width:1px;height:23px;background:#d9d9d9"></div>
<div class="a" style="left:94px;top:617px;width:1px;height:23px;background:#d9d9d9"></div>
<div class="a" style="left:163px;top:617px;width:1px;height:23px;background:#d9d9d9"></div>
<div class="a" style="left:232px;top:617px;width:1px;height:23px;background:#d9d9d9"></div>
<div class="a" style="left:301px;top:617px;width:1px;height:23px;background:#d9d9d9"></div>
<div class="a" style="left:370px;top:617px;width:1px;height:23px;background:#d9d9d9"></div>
<div class="a" style="left:439px;top:617px;width:1px;height:23px;background:#d9d9d9"></div>
<div class="a" style="left:508px;top:617px;width:1px;height:23px;background:#d9d9d9"></div>
<div class="a" style="left:577px;top:617px;width:1px;height:23px;background:#d9d9d9"></div>
<div class="a" style="left:646px;top:617px;width:1px;height:23px;background:#d9d9d9"></div>
<div class="a" style="left:715px;top:617px;width:1px;height:23px;background:#d9d9d9"></div>
<div class="a" style="left:784px;top:617px;width:70px;height:23px;background:#cce8ff;border:1px solid #99d1ff"></div>
<svg width="0" height="0" style="position:absolute"><defs><linearGradient id="xg" x1="0" y1="0" x2="0" y2="1"><stop offset="0" stop-color="#f0c4c4"/><stop offset="1" stop-color="#b83a3a"/></linearGradient></defs></svg>
<svg style="left:27px;top:624px" width="10" height="9"><path d="M4 1l3.5 3.5-3.5 3.5-3.5-3.5z" fill="#50c8d8" stroke="#3060e0" stroke-width=".8"/><path d="M4 8l3.5-3.5M5.5 1.5l3 3-3 3" fill="none" stroke="#000" stroke-width=".8" opacity=".8"/></svg>
<div class="a" style="left:38.5px;top:618px;width:45px;height:20px;overflow:hidden"><div class="t" style="left:0;top:3px">Untitled</div></div>
<svg style="left:83px;top:623px" width="10" height="10"><path d="M1.5 1.5l6.5 6.5M8 1.5l-6.5 6.5" stroke="url(#xg)" stroke-width="3.2" stroke-linecap="round"/><path d="M1.5 1.5l6.5 6.5M8 1.5l-6.5 6.5" stroke="#fff" stroke-width="1.1" stroke-linecap="round"/></svg>
<svg style="left:96px;top:624px" width="10" height="9"><path d="M4 1l3.5 3.5-3.5 3.5-3.5-3.5z" fill="#50c8d8" stroke="#3060e0" stroke-width=".8"/><path d="M4 8l3.5-3.5M5.5 1.5l3 3-3 3" fill="none" stroke="#000" stroke-width=".8" opacity=".8"/></svg>
<div class="a" style="left:107.5px;top:618px;width:45px;height:20px;overflow:hidden"><div class="t" style="left:0;top:3px">editplus</div></div>
<svg style="left:152px;top:623px" width="10" height="10"><path d="M1.5 1.5l6.5 6.5M8 1.5l-6.5 6.5" stroke="url(#xg)" stroke-width="3.2" stroke-linecap="round"/><path d="M1.5 1.5l6.5 6.5M8 1.5l-6.5 6.5" stroke="#fff" stroke-width="1.1" stroke-linecap="round"/></svg>
<svg style="left:165px;top:624px" width="10" height="9"><path d="M4 1l3.5 3.5-3.5 3.5-3.5-3.5z" fill="#50c8d8" stroke="#3060e0" stroke-width=".8"/><path d="M4 8l3.5-3.5M5.5 1.5l3 3-3 3" fill="none" stroke="#000" stroke-width=".8" opacity=".8"/></svg>
<div class="a" style="left:176.5px;top:618px;width:45px;height:20px;overflow:hidden"><div class="t" style="left:0;top:3px">949.chm</div></div>
<svg style="left:221px;top:623px" width="10" height="10"><path d="M1.5 1.5l6.5 6.5M8 1.5l-6.5 6.5" stroke="url(#xg)" stroke-width="3.2" stroke-linecap="round"/><path d="M1.5 1.5l6.5 6.5M8 1.5l-6.5 6.5" stroke="#fff" stroke-width="1.1" stroke-linecap="round"/></svg>
<svg style="left:234px;top:624px" width="10" height="9"><path d="M4 1l3.5 3.5-3.5 3.5-3.5-3.5z" fill="#50c8d8" stroke="#3060e0" stroke-width=".8"/><path d="M4 8l3.5-3.5M5.5 1.5l3 3-3 3" fill="none" stroke="#000" stroke-width=".8" opacity=".8"/></svg>
<div class="a" style="left:245.5px;top:618px;width:45px;height:20px;overflow:hidden"><div class="t" style="left:0;top:3px">templat</div></div>
<svg style="left:290px;top:623px" width="10" height="10"><path d="M1.5 1.5l6.5 6.5M8 1.5l-6.5 6.5" stroke="url(#xg)" stroke-width="3.2" stroke-linecap="round"/><path d="M1.5 1.5l6.5 6.5M8 1.5l-6.5 6.5" stroke="#fff" stroke-width="1.1" stroke-linecap="round"/></svg>
<svg style="left:303px;top:624px" width="10" height="9"><path d="M4 1l3.5 3.5-3.5 3.5-3.5-3.5z" fill="#50c8d8" stroke="#3060e0" stroke-width=".8"/><path d="M4 8l3.5-3.5M5.5 1.5l3 3-3 3" fill="none" stroke="#000" stroke-width=".8" opacity=".8"/></svg>
<div class="a" style="left:314.5px;top:618px;width:45px;height:20px;overflow:hidden"><div class="t" style="left:0;top:3px">templat</div></div>
<svg style="left:359px;top:623px" width="10" height="10"><path d="M1.5 1.5l6.5 6.5M8 1.5l-6.5 6.5" stroke="url(#xg)" stroke-width="3.2" stroke-linecap="round"/><path d="M1.5 1.5l6.5 6.5M8 1.5l-6.5 6.5" stroke="#fff" stroke-width="1.1" stroke-linecap="round"/></svg>
<svg style="left:372px;top:624px" width="10" height="9"><path d="M4 1l3.5 3.5-3.5 3.5-3.5-3.5z" fill="#50c8d8" stroke="#3060e0" stroke-width=".8"/><path d="M4 8l3.5-3.5M5.5 1.5l3 3-3 3" fill="none" stroke="#000" stroke-width=".8" opacity=".8"/></svg>
<div class="a" style="left:383.5px;top:618px;width:45px;height:20px;overflow:hidden"><div class="t" style="left:0;top:3px">xhtml.ct</div></div>
<svg style="left:428px;top:623px" width="10" height="10"><path d="M1.5 1.5l6.5 6.5M8 1.5l-6.5 6.5" stroke="url(#xg)" stroke-width="3.2" stroke-linecap="round"/><path d="M1.5 1.5l6.5 6.5M8 1.5l-6.5 6.5" stroke="#fff" stroke-width="1.1" stroke-linecap="round"/></svg>
<svg style="left:441px;top:624px" width="10" height="9"><path d="M4 1l3.5 3.5-3.5 3.5-3.5-3.5z" fill="#50c8d8" stroke="#3060e0" stroke-width=".8"/><path d="M4 8l3.5-3.5M5.5 1.5l3 3-3 3" fill="none" stroke="#000" stroke-width=".8" opacity=".8"/></svg>
<div class="a" style="left:452.5px;top:618px;width:45px;height:20px;overflow:hidden"><div class="t" style="left:0;top:3px">vb.stx</div></div>
<svg style="left:497px;top:623px" width="10" height="10"><path d="M1.5 1.5l6.5 6.5M8 1.5l-6.5 6.5" stroke="url(#xg)" stroke-width="3.2" stroke-linecap="round"/><path d="M1.5 1.5l6.5 6.5M8 1.5l-6.5 6.5" stroke="#fff" stroke-width="1.1" stroke-linecap="round"/></svg>
<svg style="left:510px;top:624px" width="10" height="9"><path d="M4 1l3.5 3.5-3.5 3.5-3.5-3.5z" fill="#50c8d8" stroke="#3060e0" stroke-width=".8"/><path d="M4 8l3.5-3.5M5.5 1.5l3 3-3 3" fill="none" stroke="#000" stroke-width=".8" opacity=".8"/></svg>
<div class="a" style="left:521.5px;top:618px;width:45px;height:20px;overflow:hidden"><div class="t" style="left:0;top:3px">worksp</div></div>
<svg style="left:566px;top:623px" width="10" height="10"><path d="M1.5 1.5l6.5 6.5M8 1.5l-6.5 6.5" stroke="url(#xg)" stroke-width="3.2" stroke-linecap="round"/><path d="M1.5 1.5l6.5 6.5M8 1.5l-6.5 6.5" stroke="#fff" stroke-width="1.1" stroke-linecap="round"/></svg>
<svg style="left:579px;top:624px" width="10" height="9"><path d="M4 1l3.5 3.5-3.5 3.5-3.5-3.5z" fill="#50c8d8" stroke="#3060e0" stroke-width=".8"/><path d="M4 8l3.5-3.5M5.5 1.5l3 3-3 3" fill="none" stroke="#000" stroke-width=".8" opacity=".8"/></svg>
<div class="a" style="left:590.5px;top:618px;width:45px;height:20px;overflow:hidden"><div class="t" style="left:0;top:3px">remove</div></div>
<svg style="left:635px;top:623px" width="10" height="10"><path d="M1.5 1.5l6.5 6.5M8 1.5l-6.5 6.5" stroke="url(#xg)" stroke-width="3.2" stroke-linecap="round"/><path d="M1.5 1.5l6.5 6.5M8 1.5l-6.5 6.5" stroke="#fff" stroke-width="1.1" stroke-linecap="round"/></svg>
<svg style="left:648px;top:624px" width="10" height="9"><path d="M4 1l3.5 3.5-3.5 3.5-3.5-3.5z" fill="#50c8d8" stroke="#3060e0" stroke-width=".8"/><path d="M4 8l3.5-3.5M5.5 1.5l3 3-3 3" fill="none" stroke="#000" stroke-width=".8" opacity=".8"/></svg>
<div class="a" style="left:659.5px;top:618px;width:45px;height:20px;overflow:hidden"><div class="t" style="left:0;top:3px">readme</div></div>
<svg style="left:704px;top:623px" width="10" height="10"><path d="M1.5 1.5l6.5 6.5M8 1.5l-6.5 6.5" stroke="url(#xg)" stroke-width="3.2" stroke-linecap="round"/><path d="M1.5 1.5l6.5 6.5M8 1.5l-6.5 6.5" stroke="#fff" stroke-width="1.1" stroke-linecap="round"/></svg>
<svg style="left:717px;top:624px" width="9" height="9"><circle cx="4" cy="4.5" r="3.8" fill="#2a5aa0"/><path d="M1.5 3q2-2 3 0t-2 3z" fill="#40a840"/></svg>
<div class="a" style="left:727.5px;top:618px;width:47px;height:20px;overflow:hidden"><div class="t" style="left:0;top:3px;font-size:12px;font-weight:bold">百度一下</div></div>
<svg style="left:773px;top:623px" width="10" height="10"><path d="M1.5 1.5l6.5 6.5M8 1.5l-6.5 6.5" stroke="url(#xg)" stroke-width="3.2" stroke-linecap="round"/><path d="M1.5 1.5l6.5 6.5M8 1.5l-6.5 6.5" stroke="#fff" stroke-width="1.1" stroke-linecap="round"/></svg>
<svg style="left:786px;top:624px" width="10" height="9"><path d="M4 1l3.5 3.5-3.5 3.5-3.5-3.5z" fill="#f05020" stroke="#c03010" stroke-width=".7"/><path d="M4 8l3.5-3.5M5.5 1.5l3 3-3 3" fill="none" stroke="#000" stroke-width=".9"/></svg>
<div class="a" style="left:797.5px;top:618px;width:45px;height:20px;overflow:hidden"><div class="t" style="left:0;top:3px">Untitled</div></div>
<svg style="left:842px;top:623px" width="10" height="10"><path d="M1.5 1.5l6.5 6.5M8 1.5l-6.5 6.5" stroke="url(#xg)" stroke-width="3.2" stroke-linecap="round"/><path d="M1.5 1.5l6.5 6.5M8 1.5l-6.5 6.5" stroke="#fff" stroke-width="1.1" stroke-linecap="round"/></svg>
<div class="a" style="left:353px;top:643px;width:1px;height:18px;background:#d0d0d0"></div>
<div class="a" style="left:431px;top:643px;width:1px;height:18px;background:#d0d0d0"></div>
<div class="a" style="left:488px;top:643px;width:1px;height:18px;background:#d0d0d0"></div>
<div class="a" style="left:544px;top:643px;width:1px;height:18px;background:#d0d0d0"></div>
<div class="a" style="left:602px;top:643px;width:1px;height:18px;background:#d0d0d0"></div>
<div class="a" style="left:659px;top:643px;width:1px;height:18px;background:#d0d0d0"></div>
<div class="a" style="left:693px;top:643px;width:1px;height:18px;background:#d0d0d0"></div>
<div class="a" style="left:724px;top:643px;width:1px;height:18px;background:#d0d0d0"></div>
<div class="a" style="left:765px;top:643px;width:1px;height:18px;background:#d0d0d0"></div>
<div class="a" style="left:841px;top:643px;width:1px;height:18px;background:#d0d0d0"></div>
<div class="t" style="left:288px;top:645px">ln 12</div>
<div class="t" style="left:358px;top:645px">col 21</div>
<div class="t" style="left:436px;top:645px">15</div>
<div class="t" style="left:493px;top:645px">54</div>
<div class="t" style="left:549px;top:645px">PC</div>
<div class="t" style="left:607px;top:645px">UTF-8</div>
<div class="t" style="left:834px;top:645px">0</div>
<div class="a" style="left:856px;top:652px;width:2px;height:2px;background:#b8b8b8"></div>
<div class="a" style="left:856px;top:655px;width:2px;height:2px;background:#b8b8b8"></div>
<div class="a" style="left:853px;top:655px;width:2px;height:2px;background:#b8b8b8"></div>
<div class="a" style="left:856px;top:658px;width:2px;height:2px;background:#b8b8b8"></div>
<div class="a" style="left:853px;top:658px;width:2px;height:2px;background:#b8b8b8"></div>
<div class="a" style="left:850px;top:658px;width:2px;height:2px;background:#b8b8b8"></div>
<!--/EXTRAS-->
</body></html>
